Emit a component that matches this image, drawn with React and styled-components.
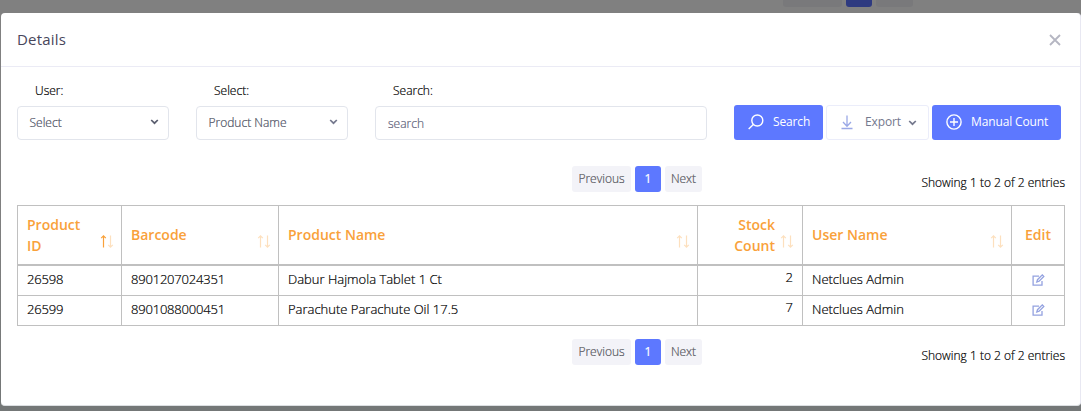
import React from "react";
import styled, { createGlobalStyle, css } from "styled-components";

const GlobalStyle = createGlobalStyle`
  *, *::before, *::after { box-sizing: border-box; }
  html, body { margin: 0; padding: 0; }
  body {
    font-family: "Open Sans", "Noto Sans", sans-serif;
    font-size: 12px;
    font-weight: 300;
    -webkit-text-stroke: 0.2px currentColor;
    color: #000;
    background: #808080;
    overflow: hidden;
  }
`;

const Page = styled.div`
  height: 411px;
  padding: 0 0 0 1px;
  background: linear-gradient(#808080 0 200px, #747777 400px);
`;

const Backdrop = styled.div`
  height: 13px;
  display: flex;
  gap: 4px;
  padding-left: 782px;
`;

const DimPage = styled.div`
  width: ${(p) => p.$width}px;
  height: 7px;
  border-radius: 0 0 3px 3px;
  background: ${(p) => (p.$active ? "#2e3a80" : "#79797b")};
`;

const Dialog = styled.section`
  height: 393px;
  background: #fff;
  border-right: 1px solid #e8e8f2;
  border-bottom: 1px solid #dcdfe2;
  border-radius: 4px;
`;

const Header = styled.header`
  height: 54px;
  padding: 0 19px 0 16px;
  display: flex;
  align-items: center;
  justify-content: space-between;
  border-bottom: 1px solid #ebebf5;
`;

const Title = styled.h1`
  margin: 0 0 2px;
  font-size: 15px;
  line-height: 22px;
  font-weight: 400;
  letter-spacing: 0.2px;
  -webkit-text-stroke: 0;
  color: #48465b;
`;

const CloseButton = styled.button`
  border: 0;
  padding: 0;
  background: none;
  display: flex;
  margin-top: 1px;
`;

const Body = styled.div`
  padding: 15px 15px 0 16px;
`;

const Filters = styled.form`
  display: flex;
  align-items: flex-end;
  height: 58px;
`;

const Field = styled.label`
  width: ${(p) => p.$width}px;
  margin-right: ${(p) => p.$after}px;
`;

const FieldLabel = styled.span`
  display: block;
  padding-left: 18px;
  line-height: 18px;
  margin-bottom: 6px;
`;

const Control = styled.span`
  height: 34px;
  display: flex;
  align-items: center;
  justify-content: space-between;
  padding: ${(p) => (p.$placeholder ? "0 12px" : "0 9px 2px 11.5px")};
  border: 1px solid #e2e5ec;
  border-radius: 4px;
  color: ${(p) => (p.$placeholder ? "#5c6078" : "#4c5062")};
`;

const Actions = styled.div`
  display: flex;
  gap: 3px;
`;

const Button = styled.button`
  width: ${(p) => p.$width}px;
  height: 35px;
  padding: 0 0 1px 14px;
  display: flex;
  align-items: center;
  border-radius: 3px;
  font: 400 12px/18px "Open Sans", "Noto Sans", sans-serif;
  letter-spacing: -0.13px;
  -webkit-text-stroke: 0;
  white-space: nowrap;
  ${(p) =>
    p.$outline
      ? css`
          color: #74788d;
          background: #fff;
          border: 1px solid #ebedfa;
        `
      : css`
          color: #fff;
          background: #5d78ff;
          border: 0;
        `}
  svg:first-child { margin-right: ${(p) => p.$gap || 9}px; }
  svg:last-child:not(:first-child) { margin: 2px 0 0 7px; }
`;

const PagerRow = styled.div`
  height: 26px;
  margin-top: ${(p) => p.$before}px;
  display: grid;
  grid-template-columns: 555px 1fr auto;
`;

const Pager = styled.nav`
  grid-column: 2;
  display: flex;
  gap: 4px;
`;

const PageLink = styled.span`
  width: ${(p) => p.$width}px;
  line-height: 26px;
  text-align: center;
  border-radius: 3px;
  font-weight: ${(p) => (p.$active ? 400 : 300)};
  color: ${(p) => (p.$active ? "#fff" : "#55565c")};
  background: ${(p) => (p.$active ? "#5d78ff" : "#f3f3f8")};
`;

const Summary = styled.span`
  line-height: 18px;
  padding-top: 8px;
`;

const Table = styled.table`
  width: 1048px;
  margin-top: 13px;
  table-layout: fixed;
  border-collapse: separate;
  border-spacing: 0;
  border-top: 1px solid #c0c0c0;
  border-left: 1px solid #c0c0c0;
  font-size: 13px;
`;

const Th = styled.th`
  height: 60px;
  padding: 0 6px 0 9px;
  border-right: 1px solid #c0c0c0;
  border-bottom: 2px solid #c0c0c0;
  color: #f9a13a;
  font-size: 14px;
  line-height: 21px;
  font-weight: 600;
  -webkit-text-stroke: 0;
  text-align: left;
`;

const HeadCell = styled.div`
  display: flex;
  align-items: center;
  justify-content: ${(p) => (p.$center ? "center" : "space-between")};
  text-align: ${(p) => (p.$right ? "right" : "left")};
  padding: ${(p) => (p.$center ? "0 3px 0 0" : "0")};
  span {
    width: ${(p) => (p.$narrow ? "60px" : p.$right ? "69px" : "auto")};
    padding-right: ${(p) => (p.$right ? 1 : 0)}px;
    margin-bottom: ${(p) => (p.$narrow || p.$right ? 0 : 2)}px;
  }
  svg { margin: 13px ${(p) => (p.$right ? 2 : 1)}px 0 0; flex: none; }
`;

const Td = styled.td`
  height: 30px;
  padding: ${(p) => (p.$number ? "0 9px 7px 0" : p.$center ? "0 9px 5px" : "0 9px 3px")};
  border-right: 1px solid #c0c0c0;
  border-bottom: 1px solid #c0c0c0;
  line-height: 20px;
  letter-spacing: ${(p) => (p.$digits ? "-0.2px" : "normal")};
  text-align: ${(p) => (p.$number ? "right" : "left")};
  svg { display: block; margin: 3px auto 0; }
`;

const Chevron = ({ color = "#595d6e" }) => (
  <svg width="9" height="6" viewBox="0 0 9 6" fill="none" stroke={color} strokeWidth="1.7">
    <path d="M1.2 1L4.5 4.2L7.8 1" />
  </svg>
);

const CloseIcon = () => (
  <svg width="12" height="12" viewBox="0 0 12 12" fill="none" stroke="#b5b6c2" strokeWidth="1.8">
    <path d="M1 1L11 11M11 1L1 11" />
  </svg>
);

const SearchIcon = () => (
  <svg width="16" height="16" viewBox="0 0 16 16" fill="none" stroke="#fff" strokeWidth="1.4">
    <circle cx="9.3" cy="6.5" r="5.5" />
    <path d="M5.3 10.5L0.7 15" />
  </svg>
);

const DownloadIcon = () => (
  <svg width="12" height="15" viewBox="0 0 12 15" fill="none" stroke="#9aa8e6" strokeWidth="1.3">
    <path d="M6 0.5V11M2 7L6 11.2L10 7M0.5 13.5H11.5" />
  </svg>
);

const PlusIcon = () => (
  <svg width="16" height="16" viewBox="0 0 16 16" fill="none" stroke="#fff" strokeWidth="1.4">
    <circle cx="8" cy="8" r="7.1" />
    <path d="M8 4V12M4 8H12" />
  </svg>
);

const SortIcon = ({ active }) => (
  <svg width="14" height="13" viewBox="0 0 14 13" fill="none" stroke="#f9a13a" strokeWidth="1.2">
    <path opacity={active ? 1 : 0.33} d="M3.5 12.5V1M1.2 3.2L3.5 0.9L5.8 3.2" />
    <path opacity="0.33" d="M10.5 0.5V12M8.2 9.8L10.5 12.1L12.8 9.8" />
  </svg>
);

const EditIcon = () => (
  <svg width="13" height="12" viewBox="0 0 13 12" fill="none" stroke="#94a2e0" strokeWidth="1.3">
    <path d="M7 2.2H1.1V11.2H10V7" />
    <path d="M4.8 8L5.5 5.7L10.3 0.9L11.8 2.4L7.1 7.2Z" />
  </svg>
);

const columns = [
  { label: "Product ID", width: 104, active: true, narrow: true },
  { label: "Barcode", width: 157 },
  { label: "Product Name", width: 419 },
  { label: "Stock Count", width: 105, right: true },
  { label: "User Name", width: 209 },
  { label: "Edit", width: 53, center: true },
];

const products = [
  { id: "26598", barcode: "8901207024351", name: "Dabur Hajmola Tablet 1 Ct", count: 2, user: "Netclues Admin" },
  { id: "26599", barcode: "8901088000451", name: "Parachute Parachute Oil 17.5", count: 7, user: "Netclues Admin" },
];

const Pagination = ({ before }) => (
  <PagerRow $before={before}>
    <Pager>
      <PageLink $width={59}>Previous</PageLink>
      <PageLink $width={26} $active>1</PageLink>
      <PageLink $width={37}>Next</PageLink>
    </Pager>
    <Summary>Showing 1 to 2 of 2 entries</Summary>
  </PagerRow>
);

export default function App() {
  return (
    <Page>
      <GlobalStyle />
      <Backdrop>
        <DimPage $width={59} />
        <DimPage $width={26} $active />
        <DimPage $width={37} />
      </Backdrop>
      <Dialog>
        <Header>
          <Title>Details</Title>
          <CloseButton type="button" aria-label="Close"><CloseIcon /></CloseButton>
        </Header>
        <Body>
          <Filters>
            <Field $width={152} $after={27}>
              <FieldLabel>User:</FieldLabel>
              <Control>Select<Chevron /></Control>
            </Field>
            <Field $width={152} $after={27}>
              <FieldLabel>Select:</FieldLabel>
              <Control>Product Name<Chevron color="#74788d" /></Control>
            </Field>
            <Field $width={332} $after={27}>
              <FieldLabel>Search:</FieldLabel>
              <Control $placeholder>search</Control>
            </Field>
            <Actions>
              <Button type="button" $width={89}><SearchIcon />Search</Button>
              <Button type="button" $width={103} $outline $gap={12}><DownloadIcon />Export<Chevron color="#74788d" /></Button>
              <Button type="button" $width={129}><PlusIcon />Manual Count</Button>
            </Actions>
          </Filters>
          <Pagination before={26} />
          <Table>
            <colgroup>
              {columns.map((c) => <col key={c.label} width={c.width} />)}
            </colgroup>
            <thead>
              <tr>
                {columns.map((c) => (
                  <Th key={c.label}>
                    <HeadCell $right={c.right} $center={c.center} $narrow={c.narrow}>
                      <span>{c.label}</span>
                      {!c.center && <SortIcon active={c.active} />}
                    </HeadCell>
                  </Th>
                ))}
              </tr>
            </thead>
            <tbody>
              {products.map((p) => (
                <tr key={p.id}>
                  <Td $digits>{p.id}</Td>
                  <Td $digits>{p.barcode}</Td>
                  <Td>{p.name}</Td>
                  <Td $number>{p.count}</Td>
                  <Td>{p.user}</Td>
                  <Td $center><EditIcon /></Td>
                </tr>
              ))}
            </tbody>
          </Table>
          <Pagination before={13} />
        </Body>
      </Dialog>
    </Page>
  );
}
